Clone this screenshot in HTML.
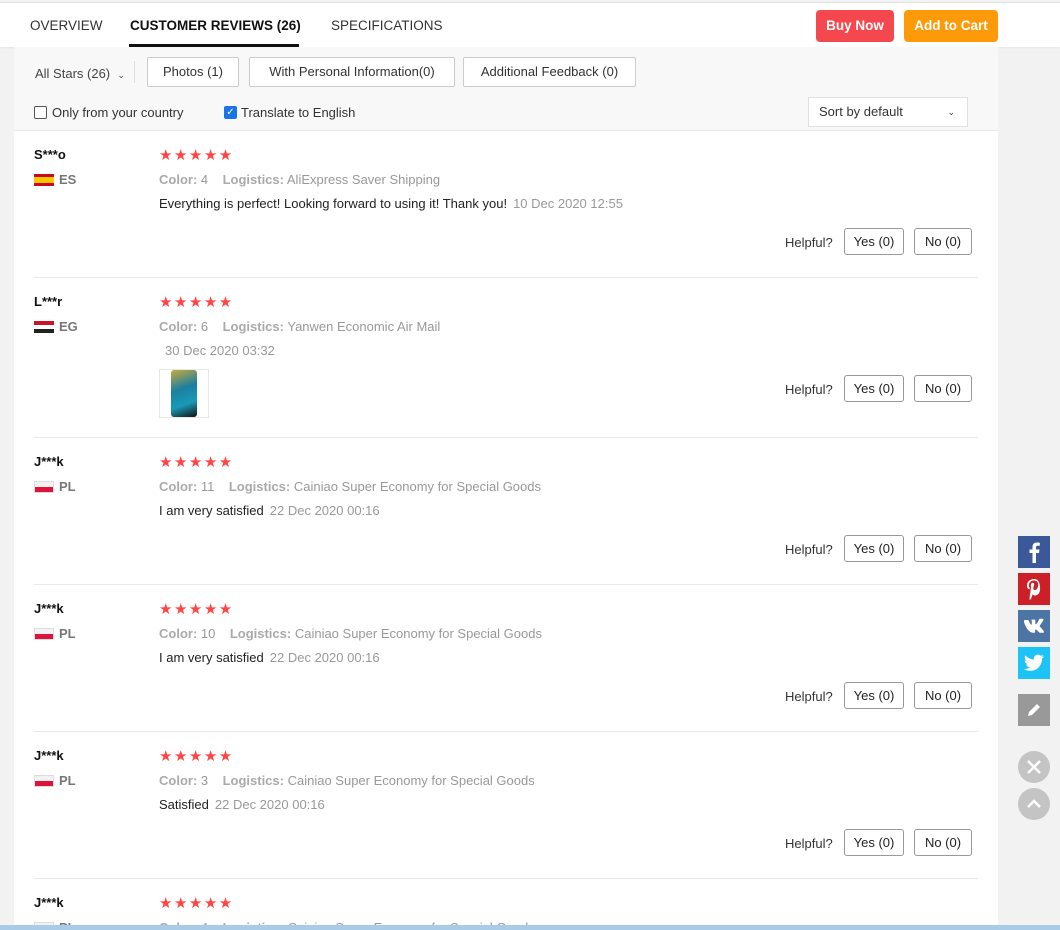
<!DOCTYPE html>
<html><head><meta charset="utf-8"><style>
*{box-sizing:border-box;margin:0;padding:0}
html,body{width:1060px;height:930px;overflow:hidden}
body{background:#f2f2f2;font-family:"Liberation Sans",Arial,sans-serif;color:#222;position:relative}
.top{position:absolute;left:0;top:2px;width:1060px;height:45px;background:#fff;border-top:1px solid #e0e0e0;box-shadow:0 1px 2px rgba(0,0,0,.06)}
.tab{position:absolute;top:15px;font-size:13.5px;color:#333}
.tab.act{font-weight:bold;color:#111}
.uline{position:absolute;left:129px;top:41px;width:170px;height:4px;background:#111}
.btn{position:absolute;top:7px;height:32px;border-radius:4px;color:#fff;font-weight:bold;font-size:13.5px;line-height:32px;text-align:center}
.panel{position:absolute;left:14px;top:47px;width:984px;height:878px;background:#fff}
.filter{position:absolute;left:0;top:0;width:984px;height:84px;background:#f8f8f8;border-bottom:1px solid #e8e8e8}
.fb{position:absolute;top:10px;height:30px;border:1px solid #ccc;background:#fff;border-radius:2px;font-size:13px;line-height:28px;text-align:center;color:#333}
.cb{position:absolute;top:59px;width:13px;height:13px;border:1px solid #555;border-radius:2px;background:#fff}
.lbl{position:absolute;top:58px;font-size:13px;color:#333}
.rev{position:absolute;left:34px;width:944px;border-bottom:1px solid #e8e8e8;overflow:hidden}
.name{position:absolute;left:0;top:16px;font-size:13px;font-weight:bold;color:#111}
.flag{position:absolute;left:0;top:43px;width:20px;height:12px}
.cc{position:absolute;left:25px;top:41px;font-size:13px;color:#777;font-weight:bold}
.stars{position:absolute;left:125px;top:15px;color:#f44;font-size:15px;letter-spacing:1.5px}
.meta{position:absolute;left:125px;top:41px;font-size:13px;color:#999}
.meta b{color:#aaa}
.txt{position:absolute;left:125px;top:65px;font-size:13px;color:#222}
.txt span{color:#999;margin-left:6px}
.help{position:absolute;left:751px;top:104px;font-size:13px;color:#333}
.yn{position:absolute;top:97px;height:27px;border:1px solid #999;border-radius:3px;font-size:13px;line-height:25px;text-align:center;color:#222;background:#fff}
.soc{position:absolute;left:1018px;width:32px;height:32px}
</style></head><body>
<div class="top">
<div class="tab" style="left:30px">OVERVIEW</div>
<div class="tab act" style="left:130px">CUSTOMER REVIEWS (26)</div>
<div class="tab" style="left:331px">SPECIFICATIONS</div>
<div class="uline"></div>
<div class="btn" style="left:816px;width:78px;background:#f5474e">Buy Now</div>
<div class="btn" style="left:904px;width:94px;background:#fc9a0a">Add to Cart</div>
</div>
<div class="panel">
<div class="filter">
<div style="position:absolute;left:21px;top:19px;font-size:13px;color:#444">All Stars (26) &nbsp;<span style="font-size:9px">&#8964;</span></div>
<div style="position:absolute;left:120px;top:14px;width:1px;height:22px;background:#e0e0e0"></div>
<div class="fb" style="left:133px;width:92px">Photos (1)</div>
<div class="fb" style="left:235px;width:206px">With Personal Information(0)</div>
<div class="fb" style="left:449px;width:173px">Additional Feedback (0)</div>
<div class="cb" style="left:20px"></div><div class="lbl" style="left:38px">Only from your country</div>
<div class="cb" style="left:210px;background:#1a73e8;border-color:#1a73e8;color:#fff;font-size:10px;line-height:11px;text-align:center">✓</div><div class="lbl" style="left:227px">Translate to English</div>
<div style="position:absolute;left:794px;top:50px;width:160px;height:30px;border:1px solid #e0e0e0;background:#fff;font-size:13px;line-height:28px;padding-left:10px;color:#333">Sort by default<span style="position:absolute;right:12px;font-size:9px">&#8964;</span></div>
</div>
</div>

<div id="revs"></div>
<div style="position:absolute;left:0;top:925px;width:1060px;height:5px;background:#a9cbe8"></div>

<div class="soc" style="top:536px;background:#3b5998"><svg width="32" height="32"><path d="M18 27V17h3l.5-3.5H18v-2c0-1 .3-1.7 1.8-1.7h2V6.7c-.4 0-1.5-.2-2.8-.2-2.8 0-4.5 1.6-4.5 4.6v2.4h-3V17h3v10z" fill="#fff"/></svg></div>
<div class="soc" style="top:573px;background:#cb2027"><svg width="32" height="32"><path d="M16.5 6C11 6 9 9.6 9 12.5c0 1.8.7 3.3 2 3.8.3.1.5 0 .5-.3l.2-.8c.1-.3 0-.4-.2-.7-.4-.5-.7-1.1-.7-2 0-2.6 2-5 5.1-5 2.8 0 4.3 1.7 4.3 4 0 3-1.3 5.5-3.3 5.5-1.1 0-1.9-.9-1.6-2 .3-1.3.9-2.8.9-3.7 0-.9-.5-1.6-1.4-1.6-1.1 0-2 1.2-2 2.7 0 1 .3 1.6.3 1.6L11.8 23c-.4 1.7 0 3.8 0 4 0 .1.2.2.3 0 .1-.1 1.3-1.6 1.7-3.1l.7-2.6c.3.6 1.3 1.2 2.4 1.2 3.1 0 5.2-2.8 5.2-6.6C22.1 9 19.7 6 16.5 6z" fill="#fff"/></svg></div>
<div class="soc" style="top:610px;background:#4c75a3"><svg width="32" height="32"><path d="M6 11h4c.3 0 .5.2.6.4 1 2.6 2.3 4.4 2.8 4.4.3 0 .4-.3.4-1v-2.6c0-.9-.6-1-.6-1.3 0-.2.2-.3.4-.3h3.2c.4 0 .5.2.5.6v3.6c0 .4.2.5.3.5.3 0 .6-.2 1.1-.7 1.6-1.9 2.5-4.3 2.5-4.3.1-.3.3-.5.7-.5h2.8c.8 0 .9.4.7.9-.3 1.6-3.6 5.8-3.6 5.8-.3.4-.3.6 0 1 .2.3 1.2 1.2 1.8 2 1.2 1.3 2.1 2.4 2.3 3.2.2.7-.2 1.1-.9 1.1H22c-.8 0-1-.6-2.4-2-1.2-1.2-1.7-1.3-2-1.3-.4 0-.5.1-.5.7v1.8c0 .5-.2.8-1.5.8-2.2 0-4.6-1.3-6.3-3.8C6.7 16.2 6 13 6 12.3c0-.4.1-.7.6-.7z" fill="#fff" transform="translate(0 -1)"/></svg></div>
<div class="soc" style="top:647px;background:#1dc2f6"><svg width="32" height="32"><path d="M26 9.5c-.7.3-1.5.5-2.3.6.8-.5 1.5-1.3 1.8-2.2-.8.5-1.7.8-2.6 1-.8-.8-1.9-1.3-3-1.3-2.3 0-4.1 1.8-4.1 4.1 0 .3 0 .6.1.9C12.5 12.4 9.5 10.8 7.4 8.3c-.4.6-.6 1.3-.6 2.1 0 1.4.7 2.7 1.8 3.4-.7 0-1.3-.2-1.9-.5 0 2 1.4 3.7 3.3 4-.6.2-1.3.2-1.9.1.5 1.6 2 2.8 3.9 2.8-1.4 1.1-3.2 1.8-5.1 1.8H6c1.8 1.2 4 1.8 6.3 1.8 7.5 0 11.7-6.2 11.7-11.7v-.5c.8-.6 1.5-1.3 2-2.1z" fill="#fff"/></svg></div>
<div class="soc" style="top:694px;background:#999"><svg width="32" height="32"><path d="M10 22l1-4 8-8 3 3-8 8z" fill="#fff"/></svg></div>
<div class="soc" style="top:751px;border-radius:50%;background:#c4c4c4"><svg width="32" height="32"><path d="M10 10l12 12M22 10L10 22" stroke="#fff" stroke-width="2.5"/></svg></div>
<div class="soc" style="top:788px;border-radius:50%;background:#c4c4c4"><svg width="32" height="32"><path d="M10 19l6-6 6 6" stroke="#fff" stroke-width="2.5" fill="none"/></svg></div>

<script>
const flags={ES:'<div class="flag" style="background:linear-gradient(#c60b1e 25%,#ffc400 25%,#ffc400 75%,#c60b1e 75%)"></div>',
EG:'<div class="flag" style="background:linear-gradient(#ce1126 33%,#fff 33%,#fff 66%,#222 66%)"></div>',
PL:'<div class="flag" style="background:linear-gradient(#f2f2f2 50%,#dc143c 50%);border:1px solid #ddd"></div>'};
const R=[
[131,147,'S***o','ES','4','AliExpress Saver Shipping','Everything is perfect! Looking forward to using it! Thank you!','10 Dec 2020 12:55'],
[278,160,'L***r','EG','6','Yanwen Economic Air Mail','','30 Dec 2020 03:32',1],
[438,147,'J***k','PL','11','Cainiao Super Economy for Special Goods','I am very satisfied','22 Dec 2020 00:16'],
[585,147,'J***k','PL','10','Cainiao Super Economy for Special Goods','I am very satisfied','22 Dec 2020 00:16'],
[732,147,'J***k','PL','3','Cainiao Super Economy for Special Goods','Satisfied','22 Dec 2020 00:16'],
[879,46,'J***k','PL','4','Cainiao Super Economy for Special Goods','','',2]];
let h='';
for(const r of R){
h+=`<div class="rev" style="top:${r[0]}px;height:${r[1]}px;${r[8]==2?'border:none;':''}"><div class="name">${r[2]}</div>${flags[r[3]]}<div class="cc">${r[3]}</div><div class="stars">★★★★★</div><div class="meta"><b>Color:</b> ${r[4]} &nbsp;&nbsp; <b>Logistics:</b> ${r[5]}</div>`;
if(r[8]!=2){h+=`<div class="txt">${r[6]}<span>${r[7]}</span></div>`;
if(r[8]==1)h+=`<div style="position:absolute;left:125px;top:91px;width:50px;height:49px;border:1px solid #e8e8e8;background:#fff"><div style="position:absolute;left:11px;top:0;width:26px;height:47px;border-radius:3px;background:linear-gradient(160deg,#c9a93a,#1b7fa0 40%,#1a9ab8 70%,#111)"></div></div>`;
h+=`<div class="help">Helpful?</div><div class="yn" style="left:810px;width:60px">Yes (0)</div><div class="yn" style="left:880px;width:58px">No (0)</div>`;}
h+='</div>';}
document.getElementById('revs').innerHTML=h;
</script>
</body></html>
